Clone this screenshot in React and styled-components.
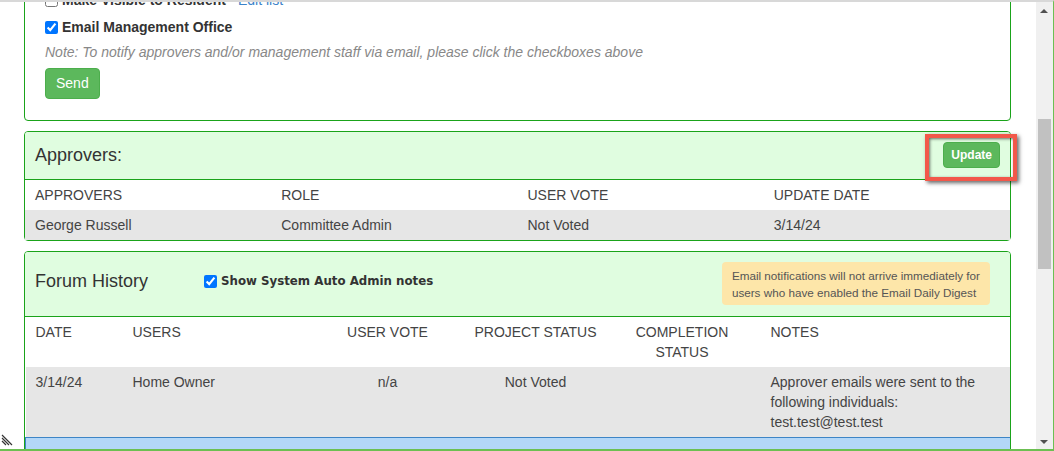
import React from 'react';
import styled, {createGlobalStyle} from 'styled-components';

// ========== Styled Components ========== //
const GREEN = '#1aa31a';

const GlobalStyle = createGlobalStyle`
	html, body {
		margin: 0;
		padding: 0;
		background: #fff;
	}
	body {
		font-family: "Liberation Sans", Arial, sans-serif;
		font-size: 14px;
		color: #333;
	}
	* {
		box-sizing: border-box;
	}
`;

const Frame = styled.div`
	position: relative;
	display: flex;
	width: 1054px;
	height: 451px;
	border-top: 2px solid #d8d8d8;
	border-right: 1px solid #6cbf52;
	border-bottom: 2px solid #6cbf52;
	overflow: hidden;
`;

const Viewport = styled.div`
	flex: 1;
	overflow: hidden;
	padding: 0 25px 0 24px;
`;

const Stack = styled.div`
	margin-top: -22px;
`;

const Panel = styled.section`
	border: 1px solid ${GREEN};
	border-radius: 4px;
	background: #fff;
	margin-bottom: 10px;
`;

const PanelBody = styled.div`
	padding: 9px 20px 21px;
`;

const CheckRow = styled.label`
	display: flex;
	align-items: center;
	height: 20px;
	line-height: 20px;
	margin-top: ${props => props.gap || 0}px;
	font-weight: bold;
	color: #333;
`;

const Checkbox = styled.input`
	width: 13px;
	height: 13px;
	margin: 0 4px 0 0;
`;

const EditLink = styled.a`
	margin-left: 12px;
	font-weight: normal;
	color: #3b82c9;
	text-decoration: none;
`;

const Note = styled.p`
	margin: 5px 0 0;
	line-height: 20px;
	font-style: italic;
	color: #888;
`;

const GreenButton = styled.button`
	display: inline-block;
	font-family: inherit;
	font-size: ${props => props.small ? '12px' : '14px'};
	font-weight: ${props => props.small ? 'bold' : 'normal'};
	line-height: ${props => props.small ? '18px' : '19px'};
	padding: ${props => props.small ? '3px 7px' : '5px 10px'};
	margin-top: ${props => props.small ? 0 : 6}px;
	color: #fff;
	background: #5cb85c;
	border: 1px solid #4cae4c;
	border-radius: 4px;
	cursor: pointer;
`;

const PanelHeader = styled.div`
	display: flex;
	align-items: ${props => props.top ? 'flex-start' : 'center'};
	padding: 10px 10px 11px;
	background: #e0fde0;
	border-bottom: 1px solid ${GREEN};
	border-radius: 3px 3px 0 0;
`;

const PanelTitle = styled.h3`
	margin: ${props => props.top ? '8px 56px 0 0' : 0};
	font-size: 18px;
	font-weight: normal;
	line-height: 22px;
	color: #333;
`;

const HeaderCheck = styled.label`
	display: flex;
	align-items: center;
	margin-top: 8px;
	height: 22px;
	font-family: "DejaVu Sans", Verdana, sans-serif;
	font-size: 11.8px;
	font-weight: bold;
	color: #333;
`;

const Spacer = styled.div`
	flex: 1;
`;

const Highlight = styled.div`
	position: relative;
`;

const HighlightFrame = styled.div`
	position: absolute;
	top: -8px;
	left: -18px;
	right: -17px;
	bottom: -13px;
	border: 4px solid #f2584a;
	box-shadow: 2px 2px 4px rgba(0, 0, 0, 0.6), inset 1px 1px 3px rgba(0, 0, 0, 0.55);
	pointer-events: none;
`;

const Warning = styled.div`
	margin-right: 10px;
	padding: 5px 10px 4px;
	font-size: 11.7px;
	line-height: 17px;
	color: #555;
	background: #fde6a9;
	border-radius: 4px;
`;

const Table = styled.table`
	width: 100%;
	border-collapse: collapse;
	table-layout: fixed;
`;

const Th = styled.th`
	padding: 5px ${props => props.pad ?? 10}px;
	line-height: 20px;
	font-weight: normal;
	text-align: ${props => props.center ? 'center' : 'left'};
	vertical-align: top;
	color: #444;
`;

const Td = styled.td`
	padding: 5px ${props => props.pad ?? 10}px;
	line-height: 20px;
	text-align: ${props => props.center ? 'center' : 'left'};
	vertical-align: top;
	color: #444;
	background: #e6e6e6;
`;

const SelectedTd = styled.td`
	height: 30px;
	background: #b3d7f8;
	border-top: 1px solid #3d85c6;
	&:first-child {
		border-left: 1px solid #3d85c6;
	}
`;

const Scrollbar = styled.div`
	position: relative;
	flex: none;
	width: 17px;
	background: #f0f0f0;
`;

const Thumb = styled.div`
	position: absolute;
	top: 117px;
	left: 2px;
	width: 13px;
	height: 150px;
	background: #c1c1c1;
`;

const Arrow = styled.div`
	position: absolute;
	left: 4px;
	${props => props.down ? 'bottom: 5px;' : 'top: 7px;'}
	width: 0;
	height: 0;
	border-left: 4px solid transparent;
	border-right: 4px solid transparent;
	${props => props.down ? 'border-top: 4px solid #505050;' : 'border-bottom: 4px solid #505050;'}
`;

const ResizeGrip = styled.svg`
	position: absolute;
	left: 1px;
	bottom: 3px;
`;

// ========== React Function Component ========== //
const approvers = [
	{name: 'George Russell', role: 'Committee Admin', vote: 'Not Voted', date: '3/14/24'},
];

const App = () => {
	return (
		<>
			<GlobalStyle/>
			<Frame>
				<Viewport>
					<Stack>
						<Panel>
							<PanelBody>
								<CheckRow>
									<Checkbox type="checkbox"/>
									Make Visible to Resident
									<EditLink href="#">Edit list</EditLink>
								</CheckRow>
								<CheckRow gap={7}>
									<Checkbox type="checkbox" defaultChecked/>
									Email Management Office
								</CheckRow>
								<Note>Note: To notify approvers and/or management staff via email, please click the checkboxes above</Note>
								<GreenButton>Send</GreenButton>
							</PanelBody>
						</Panel>

						<Panel>
							<PanelHeader>
								<PanelTitle>Approvers:</PanelTitle>
								<Spacer/>
								<Highlight>
									<GreenButton small>Update</GreenButton>
									<HighlightFrame/>
								</Highlight>
							</PanelHeader>
							<Table>
								<thead>
									<tr>
										<Th>APPROVERS</Th>
										<Th>ROLE</Th>
										<Th>USER VOTE</Th>
										<Th>UPDATE DATE</Th>
									</tr>
								</thead>
								<tbody>
									{approvers.map(a => (
										<tr key={a.name}>
											<Td>{a.name}</Td>
											<Td>{a.role}</Td>
											<Td>{a.vote}</Td>
											<Td>{a.date}</Td>
										</tr>
									))}
								</tbody>
							</Table>
						</Panel>

						<Panel>
							<PanelHeader top>
								<PanelTitle top>Forum History</PanelTitle>
								<HeaderCheck>
									<Checkbox type="checkbox" defaultChecked/>
									Show System Auto Admin notes
								</HeaderCheck>
								<Spacer/>
								<Warning>
									Email notifications will not arrive immediately for<br/>
									users who have enabled the Email Daily Digest
								</Warning>
							</PanelHeader>
							<Table>
								<colgroup>
									<col style={{width: 97}}/>
									<col style={{width: 185}}/>
									<col style={{width: 160}}/>
									<col style={{width: 136}}/>
									<col style={{width: 157}}/>
									<col/>
								</colgroup>
								<thead>
									<tr>
										<Th>DATE</Th>
										<Th>USERS</Th>
										<Th center pad={4}>USER VOTE</Th>
										<Th center pad={4}>PROJECT STATUS</Th>
										<Th center>COMPLETION STATUS</Th>
										<Th>NOTES</Th>
									</tr>
								</thead>
								<tbody>
									<tr>
										<Td>3/14/24</Td>
										<Td>Home Owner</Td>
										<Td center pad={4}>n/a</Td>
										<Td center pad={4}>Not Voted</Td>
										<Td center></Td>
										<Td>Approver emails were sent to the following individuals: test.test@test.test</Td>
									</tr>
									<tr>
										<SelectedTd/>
										<SelectedTd/>
										<SelectedTd/>
										<SelectedTd/>
										<SelectedTd/>
										<SelectedTd/>
									</tr>
								</tbody>
							</Table>
						</Panel>
					</Stack>
				</Viewport>

				<Scrollbar>
					<Arrow/>
					<Thumb/>
					<Arrow down/>
				</Scrollbar>

				<ResizeGrip width="12" height="12" viewBox="0 0 12 12">
					<path d="M1 1 L11 11 M1 4 L8 11 M1 7 L5 11" stroke="#333" strokeWidth="1.2" fill="none"/>
				</ResizeGrip>
			</Frame>
		</>
	);
}

export default App;
